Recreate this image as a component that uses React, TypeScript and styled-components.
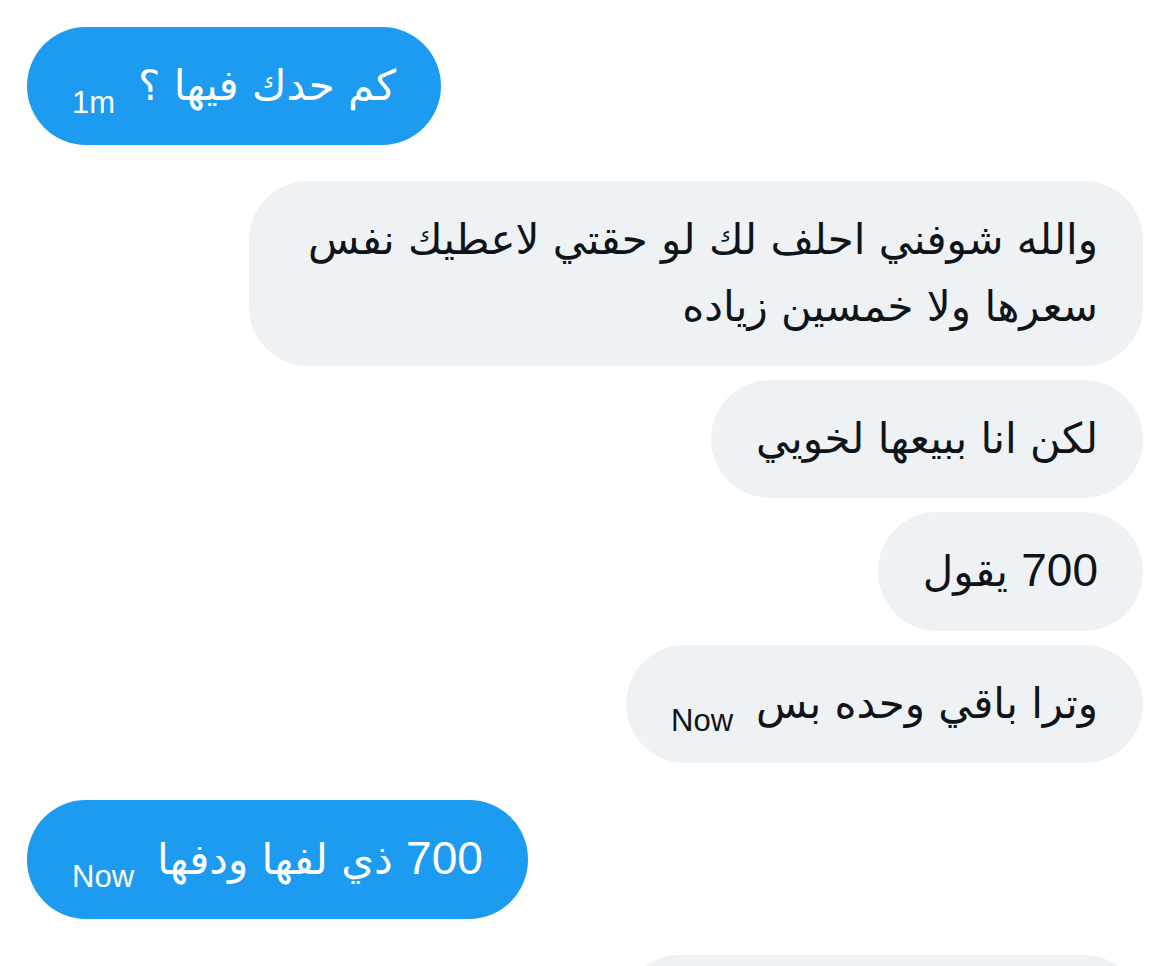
import styled, { createGlobalStyle } from 'styled-components'

const GlobalStyle = createGlobalStyle`
    body {
        margin: 0;
        background: #ffffff;
        font-family: "Liberation Sans", "DejaVu Sans", sans-serif;
        overflow: hidden;
    }
`;

const Thread = styled.div`
    display: flex;
    flex-direction: column;
    padding: 27px 26px 0 27px;
`;

const Bubble = styled.div<{ $mine?: boolean; $gap: number }>`
    display: flex;
    flex-direction: row-reverse;
    align-items: flex-end;
    flex-shrink: 0;
    gap: 23px;
    align-self: ${p => (p.$mine ? 'flex-start' : 'flex-end')};
    margin-top: ${p => p.$gap}px;
    padding: 25px 45px 26px 45px;
    min-height: 67px;
    border-radius: 59px;
    background: ${p => (p.$mine ? '#1d9bf0' : '#eff2f4')};
    color: ${p => (p.$mine ? '#ffffff' : '#0f1419')};
`;

const Text = styled.div`
    direction: rtl;
    text-align: right;
    max-width: 804px;
    font-family: "DejaVu Sans", sans-serif;
    font-size: 42px;
    line-height: 67px;
`;

const Time = styled.span`
    font-family: "Liberation Sans", sans-serif;
    font-size: 31px;
    line-height: 1;
    padding-bottom: 1px;
    white-space: nowrap;
`;

const Digits = styled.span`
    font-family: "Liberation Sans", sans-serif;
    font-size: 46px;
    letter-spacing: 2px;
`;

export default function App() {
    return (
        <>
            <GlobalStyle />
            <Thread>
                <Bubble $mine $gap={0}>
                    <Text>كم حدك فيها ؟</Text>
                    <Time>1m</Time>
                </Bubble>
                <Bubble $gap={36}>
                    <Text>والله شوفني احلف لك لو حقتي لاعطيك نفس سعرها ولا خمسين زياده</Text>
                </Bubble>
                <Bubble $gap={14}>
                    <Text>لكن انا ببيعها لخويي</Text>
                </Bubble>
                <Bubble $gap={14}>
                    <Text><Digits>700</Digits> يقول</Text>
                </Bubble>
                <Bubble $gap={14}>
                    <Text>وترا باقي وحده بس</Text>
                    <Time>Now</Time>
                </Bubble>
                <Bubble $mine $gap={37}>
                    <Text><Digits>700</Digits> ذي لفها ودفها</Text>
                    <Time>Now</Time>
                </Bubble>
                <Bubble $gap={36} style={{ width: 433 }} />
            </Thread>
        </>
    )
}
